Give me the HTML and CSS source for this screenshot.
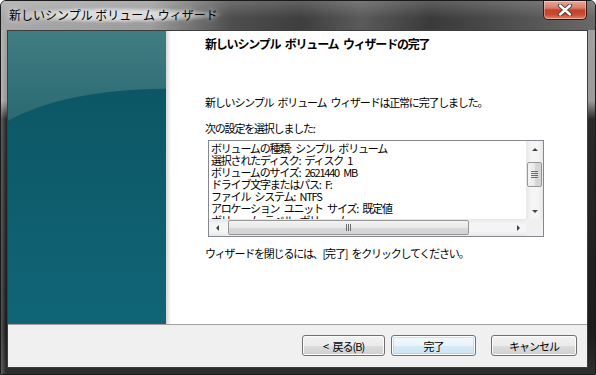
FILE: index.html
```html
<!doctype html>
<html>
  <head>
    <meta charset="utf-8">
    <title>新しいシンプル ボリューム ウィザード</title>
    <link rel="stylesheet" href="styles.css">
  </head>
  <body>
    <div class="window">
      <div class="titlebar">
        <span class="title">新しいシンプル ボリューム ウィザード</span>
        <div class="close">
          <svg width="18" height="12" viewBox="0 0 18 12">
            <path d="M4 1.5 L14 10.5 M14 1.5 L4 10.5" stroke="#3b3b3b" stroke-width="4.2" stroke-linecap="round"/>
            <path d="M4 1.5 L14 10.5 M14 1.5 L4 10.5" stroke="#fff" stroke-width="2.4" stroke-linecap="round"/>
          </svg>
        </div>
      </div>
      <div class="client">
        <div class="main">
          <div class="banner">
            <svg class="banner-art" viewBox="0 0 158 294" preserveAspectRatio="none">
              <defs>
                <linearGradient id="base" x1="0" y1="0" x2="0" y2="1">
                  <stop offset="0" stop-color="#0b5361"/>
                  <stop offset="1" stop-color="#106577"/>
                </linearGradient>
                <linearGradient id="glow" x1="0" y1="0" x2="0" y2="1">
                  <stop offset="0" stop-color="#3f7d82"/>
                  <stop offset="1" stop-color="#2b6a72"/>
                </linearGradient>
              </defs>
              <rect width="158" height="294" fill="url(#base)"/>
              <path d="M0 90 C38 70 85 59 158 58 V0 H0 Z" fill="url(#glow)"/>
            </svg>
          </div>
          <div class="shade"></div>
          <div class="content">
            <h1 class="heading">新しいシンプル ボリューム ウィザードの完了</h1>
            <p class="done">新しいシンプル ボリューム ウィザードは正常に完了しました。</p>
            <p class="label">次の設定を選択しました:</p>
            <div class="listbox">
              <div class="list-text">
                <div>ボリュームの種類: シンプル ボリューム</div>
                <div>選択されたディスク: ディスク 1</div>
                <div>ボリュームのサイズ: 2621440 MB</div>
                <div>ドライブ文字またはパス: F:</div>
                <div>ファイル システム: NTFS</div>
                <div>アロケーション ユニット サイズ: 既定値</div>
                <div>ボリューム ラベル: ボリューム</div>
              </div>
              <div class="vscroll">
                <span class="arrow up"></span>
                <span class="vthumb"><i></i><i></i><i></i><i></i></span>
                <span class="vtrack"></span>
                <span class="arrow down"></span>
              </div>
              <div class="hscroll">
                <span class="arrow left"></span>
                <span class="hthumb"><i></i><i></i><i></i></span>
                <span class="htrack"></span>
                <span class="arrow right"></span>
              </div>
              <div class="corner"></div>
            </div>
            <p class="close-hint">ウィザードを閉じるには、[完了] をクリックしてください。</p>
          </div>
        </div>
        <div class="footer">
          <button class="btn">&lt; 戻る(B)</button>
          <button class="btn default">完了</button>
          <button class="btn cancel">キャンセル</button>
        </div>
      </div>
    </div>
  </body>
</html>
```

FILE: styles.css
```css
*, *:before, *:after {
  margin: 0;
  padding: 0;
  box-sizing: border-box;
}

body {
  width: 596px;
  height: 375px;
  overflow: hidden;
  background: #fff;
  font-family: "Noto Sans CJK JP", "DejaVu Sans", sans-serif;
}

.window {
  width: 596px;
  height: 375px;
  display: flex;
  flex-direction: column;
  padding: 0 7px 6px 6px;
  border: 1px solid #1a1a1a;
  border-radius: 6px 6px 0 0;
  background:
    linear-gradient(to right, rgba(255,255,255,.25) 0, rgba(255,255,255,0) 5px, rgba(255,255,255,0) 100%),
    linear-gradient(to bottom, #a4a4a4 0, #9a9a9a 100px, #2a2a2a 118px, #1c1c1c 330px, #2e2e2e 100%);
}

.titlebar {
  height: 29px;
  margin: 0 -7px 0 -6px;
  padding: 0 7px 0 6px;
  display: flex;
  align-items: flex-start;
  justify-content: space-between;
  border-radius: 5px 5px 0 0;
  background:
    linear-gradient(to bottom, rgba(255,255,255,.18), rgba(255,255,255,0) 60%),
    linear-gradient(to right, #a9a9a9 0, #9c9c9c 150px, #4e4e4e 230px, #3e3e3e 300px, #5a5a5a 360px, #3a3a3a 430px, #4c4c4c 500px, #6a6a6a 596px);
}

.title {
  margin-top: 6px;
  margin-left: 1px;
  font-size: 12px;
  line-height: 16px;
  color: #000;
  padding: 0 4px 0 1px;
  background: radial-gradient(ellipse at center, rgba(235,235,235,.75) 35%, rgba(235,235,235,0) 72%);
  text-shadow: 0 0 6px #fff;
}

.close {
  width: 44px;
  height: 19px;
  margin-right: 1px;
  display: flex;
  align-items: center;
  justify-content: center;
  border: 1px solid #3a1510;
  border-top: 0;
  border-radius: 0 0 5px 5px;
  background: linear-gradient(to bottom, #e9a99b 0, #d77a66 40%, #c2432c 50%, #c84a31 75%, #e2866e 100%);
  box-shadow: inset 0 0 0 1px rgba(255,255,255,.35);
}

.client {
  flex: 1;
  display: flex;
  flex-direction: column;
  border: 1px solid #3d3d3d;
  background: #f0f0f0;
}

.main {
  height: 294px;
  display: flex;
  background: #fff;
  border-bottom: 1px solid #a0a0a0;
}

.banner {
  width: 158px;
  height: 100%;
}

.banner-art {
  display: block;
  width: 158px;
  height: 100%;
}

.shade {
  width: 5px;
  background: linear-gradient(to right, #d6d6d6, #eeeeee 60%, #fff);
}

.content {
  flex: 1;
  padding: 6px 0 0 34px;
  color: #000;
  font-size: 11px;
  letter-spacing: -1.2px;
  word-spacing: 3px;
}

.heading {
  font-size: 12px;
  font-weight: bold;
  letter-spacing: -1.2px;
  line-height: 14px;
}

.done {
  margin-top: 44px;
  line-height: 14px;
}

.label {
  margin-top: 12px;
  line-height: 14px;
}

.listbox {
  margin: 5px 0 0 3px;
  width: 336px;
  height: 97px;
  border: 1px solid #828790;
  display: grid;
  grid-template-columns: 1fr 17px;
  grid-template-rows: 1fr 17px;
  background: #fff;
}

.list-text {
  overflow: hidden;
  padding: 1px 0 0 2px;
  line-height: 12px;
  white-space: nowrap;
}

.vscroll,
.hscroll {
  display: flex;
  align-items: center;
  background: linear-gradient(to right, #e6e6e6, #f5f5f5 30%, #f5f5f5 70%, #e8e8e8);
}

.vscroll {
  flex-direction: column;
}

.hscroll {
  background: linear-gradient(to bottom, #e6e6e6, #f5f5f5 30%, #f5f5f5 70%, #e8e8e8);
}

.vtrack,
.htrack {
  flex: 1;
}

.arrow {
  width: 17px;
  height: 17px;
  flex: none;
  position: relative;
}

.arrow:after {
  content: "";
  position: absolute;
  left: 50%;
  top: 50%;
  border: 3px solid transparent;
}

.arrow.up:after {
  margin: -5px 0 0 -3px;
  border-bottom: 3px solid #444;
}

.arrow.down:after {
  margin: -1px 0 0 -3px;
  border-top: 3px solid #444;
}

.arrow.left:after {
  margin: -3px 0 0 -5px;
  border-right: 3px solid #444;
}

.arrow.right:after {
  margin: -3px 0 0 -1px;
  border-left: 3px solid #444;
}

.vthumb {
  width: 15px;
  height: 25px;
  margin-top: 4px;
  border: 1px solid #979797;
  border-radius: 2px;
  background: linear-gradient(to right, #f3f3f3, #e9e9e9 50%, #d8d8d8 51%, #d3d3d3);
  display: flex;
  flex-direction: column;
  align-items: center;
  justify-content: center;
  gap: 1px;
}

.vthumb i {
  display: block;
  width: 7px;
  height: 1px;
  background: #6b6b6b;
}

.hthumb {
  height: 15px;
  width: 241px;
  margin-left: 2px;
  border: 1px solid #979797;
  border-radius: 2px;
  background: linear-gradient(to bottom, #f3f3f3, #e9e9e9 50%, #d8d8d8 51%, #d3d3d3);
  display: flex;
  align-items: center;
  justify-content: center;
  gap: 1px;
}

.hthumb i {
  display: block;
  width: 1px;
  height: 7px;
  background: #6b6b6b;
}

.corner {
  background: #f0f0f0;
}

.close-hint {
  margin-top: 9px;
  line-height: 14px;
}

.footer {
  flex: 1;
  display: flex;
  align-items: center;
  padding: 0 0 1px 294px;
  gap: 6px;
}

.btn {
  width: 83px;
  height: 21px;
  font-family: "Noto Sans CJK JP", "DejaVu Sans", sans-serif;
  font-size: 11px;
  letter-spacing: -1px;
  word-spacing: 3px;
  color: #000;
  border: 1px solid #707070;
  border-radius: 3px;
  background: linear-gradient(to bottom, #f2f2f2 0, #ebebeb 50%, #dddddd 51%, #cfcfcf 100%);
  box-shadow: inset 0 0 0 1px #fcfcfc;
}

.btn.default {
  width: 85px;
  border-color: #3c7fb1;
  background: linear-gradient(to bottom, #f4fafd 0, #e8f3fa 50%, #d6eaf6 51%, #cde4f2 100%);
  box-shadow: inset 0 0 0 1px #fff, inset 0 0 0 2px rgba(72,216,251,.35);
}

.btn.cancel {
  margin-left: 9px;
  width: 86px;
}
```
